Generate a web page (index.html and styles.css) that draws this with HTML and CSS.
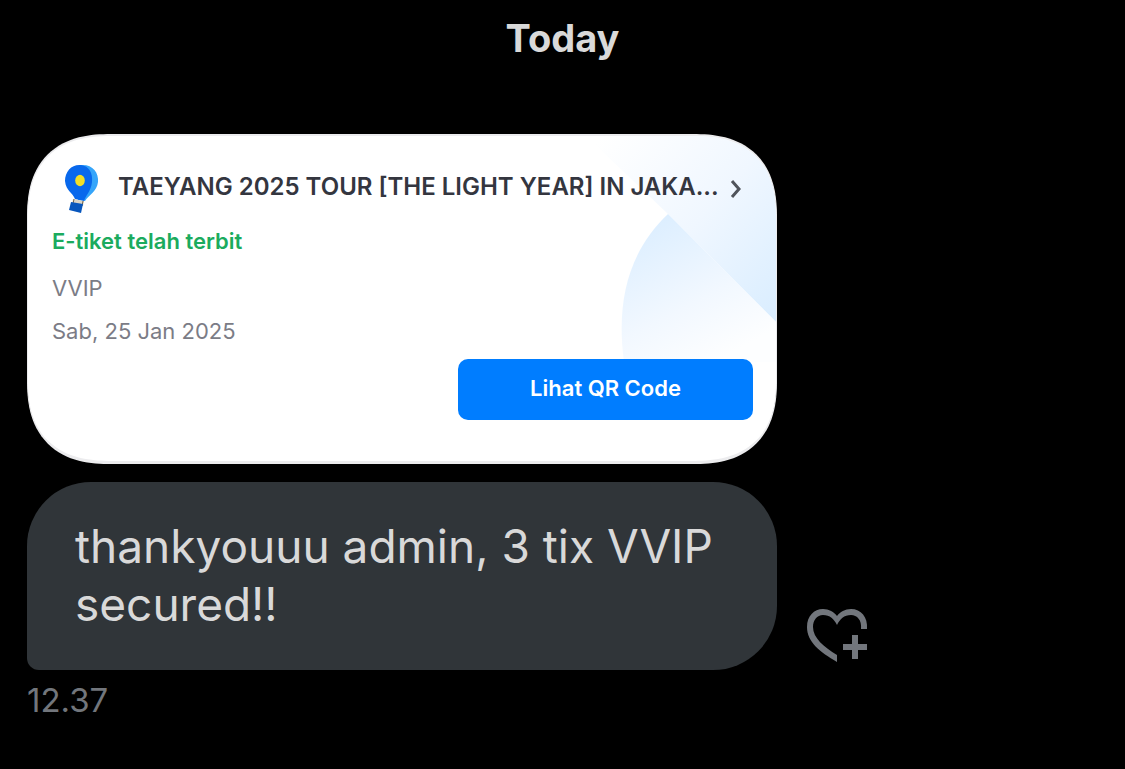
FILE: index.html
```html
<!DOCTYPE html>
<html lang="id">
<head>
    <meta charset="UTF-8">
    <meta name="viewport" content="width=device-width, initial-scale=1">
    <title>Messages</title>
    <link rel="stylesheet" href="styles.css">
</head>
<body>
    <main class="chat">
        <h1 class="chat-day">Today</h1>

        <article class="ticket">
            <svg class="ticket-pattern" viewBox="0 0 190 330" aria-hidden="true">
                <defs>
                    <linearGradient id="beam" x1="0" y1="0.1" x2="1" y2="1">
                        <stop offset="0" stop-color="#ffffff"/>
                        <stop offset="0.5" stop-color="#f0f7ff"/>
                        <stop offset="1" stop-color="#d9edff"/>
                    </linearGradient>
                    <linearGradient id="disc" x1="0.1" y1="0.1" x2="0.6" y2="1">
                        <stop offset="0" stop-color="#dceeff"/>
                        <stop offset="0.6" stop-color="#f2f8ff"/>
                        <stop offset="1" stop-color="#fdfeff"/>
                    </linearGradient>
                </defs>
                <path fill="url(#beam)" d="M0 0H190V186L82 78Z"/>
                <path fill="url(#disc)" d="M82 78L190 186V226H38C30 166 42 116 82 78Z"/>
            </svg>
            <header class="ticket-header">
                <svg class="ticket-logo" viewBox="0 0 36 50" aria-hidden="true">
                    <path fill="#35a5fa" d="M17 1C28 0 35 8 34 18C33 27 25 31 21 37L14 36Z"/>
                    <path fill="#0868ec" d="M17 1C25 2 29 9 28 18C27 27 22 31 20 37L11 35C9 29 2 27 1 17C1 7 8 0 17 1Z"/>
                    <ellipse cx="16" cy="16.500" rx="4.800" ry="5.800" fill="#f2df25"/>
                    <path fill="#d9d3c5" d="M9 35L20 37L19 42L8 40Z"/>
                    <path fill="none" stroke="#71664f" d="M10 35L9 40M19 37L18 42"/>
                    <path fill="#0756bd" d="M7 38L19 40L17 49L5 46Z"/>
                </svg>
                <h2 class="ticket-title">TAEYANG 2025 TOUR [THE LIGHT YEAR] IN JAKA...</h2>
                <svg class="ticket-arrow" viewBox="0 0 12 18" aria-hidden="true">
                    <path d="M2 1L9 9L2 17" fill="none" stroke="#50545b" stroke-width="3"/>
                </svg>
            </header>
            <p class="ticket-status">E-tiket telah terbit</p>
            <p class="ticket-info">VVIP</p>
            <p class="ticket-info">Sab, 25 Jan 2025</p>
            <button class="ticket-button" type="button">Lihat QR Code</button>
        </article>

        <div class="message-row">
            <p class="message">thankyouuu admin, 3 tix VVIP secured!!</p>
            <button class="react-button" type="button" aria-label="Add reaction">
                <svg class="react-icon" viewBox="0 0 62 54" aria-hidden="true">
                    <path d="M30 46V53C13 43 0 33 0 18C0 7 7 0 16 0C22 0 27 3 30 7C33 3 38 0 44 0C54 0 61 8 60 20H54C55 11 50 6 44 6C37 6 33 10 30 16C27 10 23 6 16 6C10 6 6 11 6 18C6 29 17 38 30 46Z" fill="#72767c"/>
                    <path d="M48 26V50M36 38H60" fill="none" stroke="#72767c" stroke-width="6"/>
                </svg>
            </button>
        </div>
        <time class="message-time" datetime="12:37">12.37</time>
    </main>
</body>
</html>
```
FILE: styles.css
```css
* {
    box-sizing: border-box;
}
body {
    margin: 0;
    background-color: #000;
    color: #d9d9d9;
    font-family: Inter, "Liberation Sans", sans-serif;
}
h1, h2, p {
    margin: 0;
}

.chat {
    padding: 14px 27px;
}
.chat-day {
    margin-bottom: 72px;
    font-size: 38px;
    line-height: 48px;
    font-weight: 700;
    text-align: center;
}

.ticket {
    position: relative;
    display: flex;
    flex-direction: column;
    width: 70%;
    padding: 28px 23px 41px 24px;
    overflow: hidden;
    border-radius: 84px;
    corner-shape: superellipse(1.3);
    border: 2px solid #ececee;
    border-width: 2px 1px 3px;
    background-color: #fff;
    color: #7b7c86;
}
.ticket-pattern {
    position: absolute;
    top: 0;
    right: 0;
    width: 190px;
    height: 330px;
}
.ticket-header {
    position: relative;
    display: flex;
    align-items: center;
    padding: 0 11px 0 12px;
}
.ticket-logo {
    flex: none;
    width: 36px;
    height: 50px;
    margin-right: 18px;
}
.ticket-title {
    flex: 1;
    min-width: 0;
    padding-bottom: 4px;
    overflow: hidden;
    color: #34363f;
    font-size: 24px;
    line-height: 32px;
    font-weight: 600;
    white-space: nowrap;
}
.ticket-arrow {
    flex: none;
    width: 12px;
    height: 18px;
}
.ticket-status {
    margin: 12px 0 17px;
    color: #1bab5e;
    font-size: 22px;
    line-height: 30px;
    font-weight: 600;
}
.ticket-info {
    margin-bottom: 13px;
    font-size: 22px;
    line-height: 30px;
}
.ticket-button {
    position: relative;
    align-self: flex-end;
    width: 42%;
    height: 61px;
    padding: 0 0 4px;
    border: none;
    border-radius: 10px;
    background-color: #007dff;
    color: #fff;
    font-family: inherit;
    font-size: 22px;
    font-weight: 600;
    cursor: pointer;
}

.message-row {
    display: flex;
    align-items: flex-end;
    gap: 30px;
    margin-top: 18px;
}
.message {
    width: 70%;
    padding: 35px 48px 37px;
    border-radius: 64px 64px 64px 12px;
    background-color: #303539;
    font-size: 46px;
    line-height: 58px;
}
.react-button {
    padding: 0 0 7px;
    border: none;
    background: none;
    cursor: pointer;
}
.react-icon {
    display: block;
    width: 62px;
    height: 54px;
}
.message-time {
    display: block;
    margin-top: 10px;
    color: #72767c;
    font-size: 33px;
    line-height: 40px;
}
```
